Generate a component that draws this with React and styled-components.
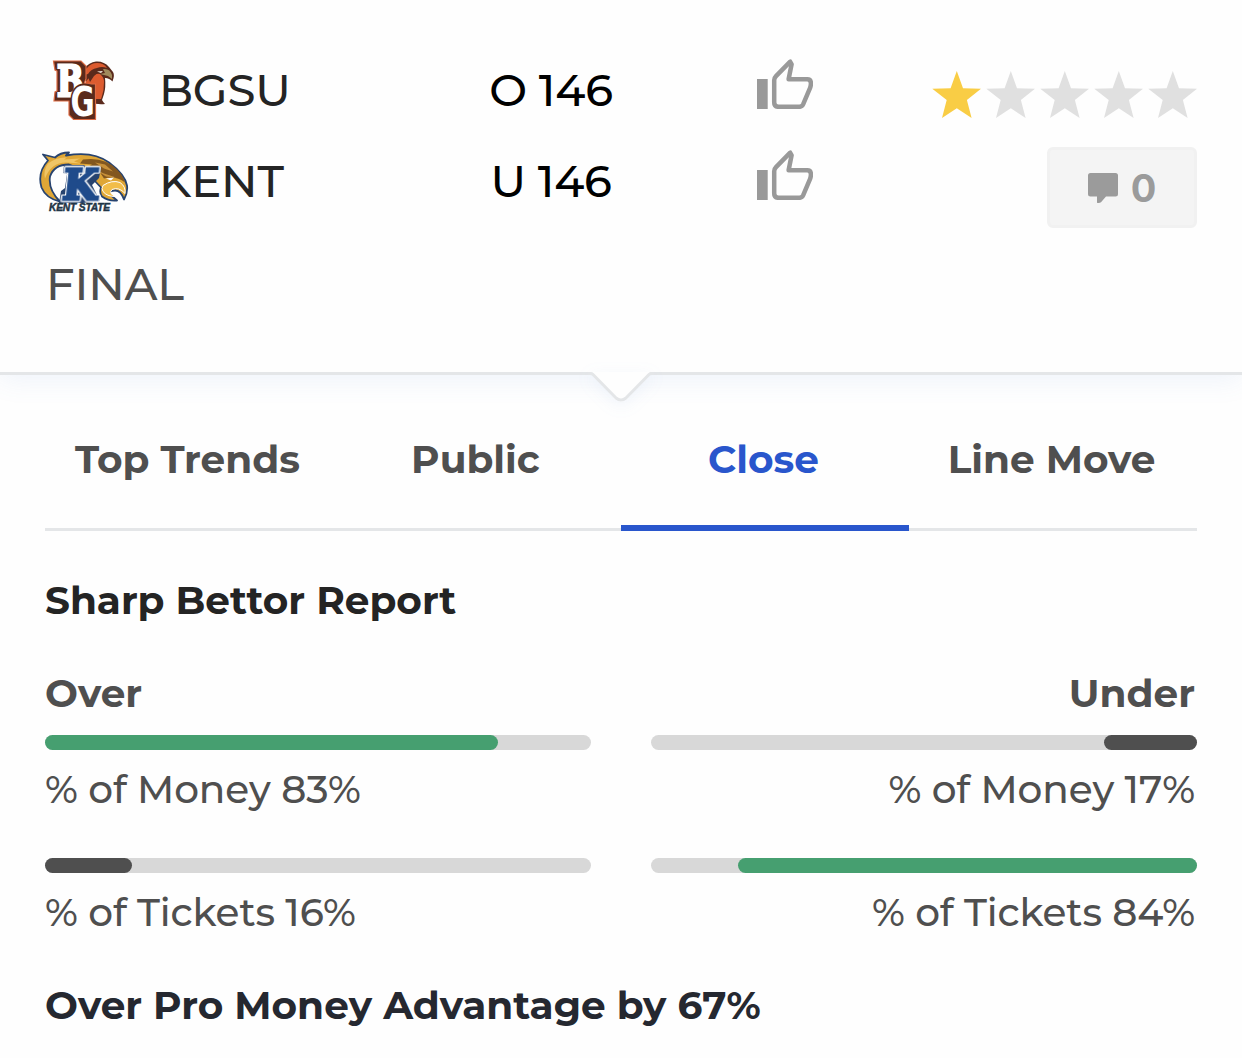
import styled, { createGlobalStyle } from "styled-components";

/* ─── data ────────────────────────────────────────────── */

const RATING = 1;

const TABS = [
  { label: "Top Trends" },
  { label: "Public" },
  { label: "Close", active: true },
  { label: "Line Move" },
];

const SIDES = [
  {
    name: "Over",
    stats: [
      { label: "% of Money", value: 83 },
      { label: "% of Tickets", value: 16 },
    ],
  },
  {
    name: "Under",
    end: true,
    stats: [
      { label: "% of Money", value: 17 },
      { label: "% of Tickets", value: 84 },
    ],
  },
];

/* ─── UI ──────────────────────────────────────────────── */

const GlobalStyle = createGlobalStyle`
  * {
    box-sizing: border-box;
  }
  body {
    margin: 0;
    background: #fefefe;
    font-family: Montserrat, Inter, sans-serif;
    color: #4f4f4f;
  }
`;

const Page = styled.main`
  width: 1242px;
  height: 1058px;
  overflow: hidden;
`;

const Header = styled.header`
  position: relative;
  display: flex;
  justify-content: space-between;
  height: 375px;
  padding: 45px 45px 0 38px;
  background: #fefefe;
  border-bottom: 3px solid #e4e6e8;
  box-shadow: 0 4px 26px rgba(90, 140, 220, 0.1);
`;

const Notch = styled.svg`
  position: absolute;
  left: 585px;
  bottom: -36px;
  filter: drop-shadow(0 4px 8px rgba(90, 140, 220, 0.08));
`;

const Teams = styled.div`
  width: 820px;
`;

const TeamRow = styled.div`
  display: grid;
  grid-template-columns: 122px 327px 128px 1fr;
  align-items: center;
  height: 91px;
  font-size: 45px;
  font-weight: 500;
  letter-spacing: -0.2px;
  white-space: nowrap;

  svg {
    display: block;
  }
`;

const TeamName = styled.span`
  margin: -3px 0 0 -1px;
  color: #242424;
`;

const Line = styled.span`
  margin-top: -3px;
  color: #000;
  justify-self: center;
`;

const ThumbButton = styled.button`
  width: 56px;
  margin: 0 0 13px 142px;
  padding: 0;
  border: 0;
  background: none;
`;

const Status = styled.div`
  margin: 30px 0 0 8px;
  font-size: 45px;
  font-weight: 500;
  line-height: 54px;
  letter-spacing: -0.2px;
`;

const Side = styled.div`
  display: flex;
  flex-direction: column;
  align-items: flex-end;
  padding-top: 26px;
`;

const Stars = styled.div`
  display: flex;
  gap: 5px;

  svg {
    display: block;
  }
`;

const Comments = styled.button`
  display: flex;
  align-items: center;
  justify-content: center;
  gap: 13px;
  width: 150px;
  height: 81px;
  margin-top: 28px;
  border: 3px solid #f1f1f1;
  border-radius: 6px;
  background: #f4f4f4;
  color: #9b9b9b;
  font: 700 38px Inter, sans-serif;
`;

const Body = styled.section`
  padding: 0 45px;
`;

const TabList = styled.nav`
  display: grid;
  grid-template-columns: repeat(4, 1fr);
  height: 156px;
  border-bottom: 3px solid #e4e6e8;
`;

const Tab = styled.button`
  height: 156px;
  padding: 18px 3px 0 0;
  border: 0;
  border-bottom: 6px solid ${(p) => (p.$active ? "#2956cc" : "transparent")};
  background: none;
  color: ${(p) => (p.$active ? "#2956cc" : "#4f4f4f")};
  font: inherit;
  font-size: 39px;
  font-weight: 700;
  white-space: nowrap;
`;

const Title = styled.h2`
  margin: 0;
  padding-top: ${(p) => p.$top || 0}px;
  font-size: 39px;
  line-height: 48px;
  font-weight: 700;
  color: ${(p) => p.$color};
  white-space: nowrap;
`;

const Report = styled.div`
  display: grid;
  grid-template-columns: 1fr 1fr;
  gap: 60px;
  margin-top: 45px;
`;

const SideColumn = styled.div`
  display: flex;
  flex-direction: column;
  align-items: ${(p) => (p.$end ? "flex-end" : "flex-start")};
`;

const SideName = styled.h3`
  margin: 0 0 18px;
  padding-right: 2px;
  font-size: 39px;
  line-height: 48px;
  font-weight: 700;
`;

const Track = styled.div`
  display: flex;
  justify-content: ${(p) => (p.$end ? "flex-end" : "flex-start")};
  width: 100%;
  height: 15px;
  border-radius: 8px;
  background: #d8d8d8;
`;

const Fill = styled.div`
  height: 100%;
  border-radius: 8px;
  background: ${(p) => (p.$lead ? "#469f70" : "#4f4f4f")};
`;

const Stat = styled.p`
  margin: 15px 0 45px;
  padding-right: 2px;
  font-size: 39px;
  font-weight: 500;
  line-height: 48px;
  letter-spacing: -0.08px;
  white-space: nowrap;
`;

/* outlined block letter used by the team logos */
const LogoLetter = styled.text`
  font-family: ${(p) => p.$font || "DejaVu Serif"}, serif;
  font-size: ${(p) => p.$size}px;
  font-weight: 700;
  paint-order: stroke;
  stroke-linejoin: miter;
`;

const HaloLetter = styled(LogoLetter)`
  filter: drop-shadow(1px 0 0 #fff) drop-shadow(-1px 0 0 #fff)
    drop-shadow(0 1px 0 #fff) drop-shadow(0 -1px 0 #fff);
`;

/* ─── icons and logos ─────────────────────────────────── */

function Thumb() {
  return (
    <svg width="56" height="50" viewBox="0 0 56 50" fill="none">
      <path d="M0 20h10.7v30H0z" fill="#999" />
      <path
        d="M33.2 2.700 19 17.100q-1.800 1.800-1.800 4.200v22.200q0 4.300 4.300 4.300h20.800q2.700 0 3.800-2.400l7-16.600q.8-1.900.8-4.600 0-3.900-3.600-3.900H31.600l3-15Z"
        stroke="#999"
        strokeWidth="4.500"
        strokeLinejoin="round"
      />
    </svg>
  );
}

function Star({ on }) {
  return (
    <svg width="49" height="48" viewBox="0 0 49 48">
      <path
        d="m24.800 0 6.200 17.200 18 .5L34.900 29l4.700 18-14.800-9.800L10 47l4.700-18L.3 17.700l18.300-.5Z"
        fill={on ? "#f9cd45" : "#e0e0e0"}
      />
    </svg>
  );
}

function CommentIcon() {
  return (
    <svg width="30" height="30" viewBox="0 0 30 30">
      <path
        d="M2.500 0h25Q30 0 30 2.500v18.500q0 2.500-2.500 2.500H18l-5 5.700q-1.500 1.200-4 .6v-6.300H2.500Q0 23.500 0 21V2.500Q0 0 2.500 0Z"
        fill="#9b9b9b"
      />
    </svg>
  );
}

function FalconsLogo() {
  return (
    <svg width="92" height="64" viewBox="0 0 92 64">
      {/* falcon head */}
      <path
        d="M46 10Q51 3 58 2.500q8-.5 13 5.500l4 5q2 3-.5 9.500-3-3.500-7.500-3.500 1 9-1 16l-2 6q1 2 3 4-8 1-15-2Z"
        fill="#5a2a1c"
      />
      <path
        d="M49 9q4-5 10-5 7 0 10 5-5-2-10 0-6 1-9 6l-4 1q-1-4 3-7Zm2 10q5-5 11-4 4 3 4 8 0 8-2 14l-1 3h-7l-4-9-5-2q-1-6 4-10Z"
        fill="#dc5b2f"
      />
      <path d="m50 18 5-4 6-1-5 4-4 6Z" fill="#5a2a1c" />
      <path d="M65 10q7-1 9 6v4l-4-3-8-2 5-1Z" fill="#a08a5c" />
      <path d="m59 12.500 6-.5-2 2Z" fill="#f4efe6" />
      {/* shield behind the monogram */}
      <path
        d="M15.500 2H43l5 5v13l-2 5h11.500v35.500H35.500L31 56V42H16l1-9 2-1V12l-2-1Z"
        fill="#5a2a1c"
        stroke="#dc6a43"
        strokeWidth="1.200"
      />
      <LogoLetter
        $size={42}
        fill="#fff"
        stroke="#fff"
        strokeWidth="3"
        transform="translate(19 36.500) scale(.74 1)"
      >
        B
      </LogoLetter>
      <LogoLetter
        $font="DejaVu Sans"
        $size={40}
        fill="#fff"
        stroke="#5a2a1c"
        strokeWidth="4"
        transform="translate(32.500 57) scale(.74 1)"
      >
        G
      </LogoLetter>
    </svg>
  );
}

function FlashesLogo() {
  return (
    <svg width="92" height="64" viewBox="-1 -0.500 92 64">
      {/* wing sweeping into the eagle head */}
      <path
        d="M21 51Q7 48 2.500 37-2 22 9 10L4 4l12 3q5-5 14-5l-3 3q27-5 43 7 16 12 18 23 1 7-3 14-3-9-9-9-5 0-6 3l8 7q-8 1-15-4-3-4-1-9L46 20 30 14Q15 14 11 26q-2 13 10 25Z"
        fill="#dfa636"
        stroke="#27436f"
        strokeWidth="1.800"
        strokeLinejoin="round"
      />
      <path
        d="M9 13q9-7 19-6l-3 2 16-1-6 3 7 2-15-1Q12 12 6 28q-2-8 3-15Z"
        fill="#f0c566"
      />
      <path
        d="M44 9q22-3 34 10 6 6 8 13-9-7-21-4l-6-9-11-2 5-3-12-1Z"
        fill="#82571f"
      />
      <path d="m56 12 10 2 8 7-9-3Zm0 7 9 4 12 4-10-1Z" fill="#c8913a" />
      <path d="m67 28 8-1-3 3Z" fill="#fff" />
      <path
        d="M64 35q9-6 17-3 6 4 5 11-6-7-13-4-2 2-1 4l4 3q-8 0-12-5-2-3 0-6Z"
        fill="#f2bd49"
        stroke="#fff"
        strokeWidth="1"
      />
      <path d="M25 14.500h20l3 3h14l-2 10-7 7 8 16-17 2H20l2-12 4-3 2-14-4-1Z" fill="#27436f" />
      <HaloLetter
        $size={42}
        fill="#1f4b8b"
        stroke="#1f4b8b"
        strokeWidth="3"
        transform="translate(22.500 49) skewX(-6) scale(.95 1)"
      >
        K
      </HaloLetter>
      <text
        x="10"
        y="60"
        fontFamily="Liberation Sans, sans-serif"
        fontWeight="700"
        fontStyle="italic"
        fontSize="11"
        textLength="61"
        lengthAdjust="spacingAndGlyphs"
        fill="#1f3546"
        stroke="#1f3546"
        strokeWidth="0.500"
      >
        KENT STATE
      </text>
    </svg>
  );
}

const TEAMS = [
  { name: "BGSU", line: "O 146", Logo: FalconsLogo },
  { name: "KENT", line: "U 146", Logo: FlashesLogo },
];

/* ─── rows ───────────────────────────────────────────── */

function StatBlock({ stat, end }) {
  return (
    <>
      <Track $end={end}>
        <Fill $lead={stat.value > 50} style={{ width: `${stat.value}%` }} />
      </Track>
      <Stat>
        {stat.label} {stat.value}%
      </Stat>
    </>
  );
}

/* ─── main ───────────────────────────────────────────── */

export default function App() {
  return (
    <Page>
      <GlobalStyle />
      <Header>
        <Teams>
          {TEAMS.map(({ name, line, Logo }) => (
            <TeamRow key={name}>
              <Logo />
              <TeamName>{name}</TeamName>
              <Line>{line}</Line>
              <ThumbButton type="button" aria-label={`Like ${line}`}>
                <Thumb />
              </ThumbButton>
            </TeamRow>
          ))}
          <Status>FINAL</Status>
        </Teams>

        <Side>
          <Stars>
            {[0, 1, 2, 3, 4].map((i) => (
              <Star key={i} on={i < RATING} />
            ))}
          </Stars>
          <Comments type="button">
            <CommentIcon /> 0
          </Comments>
        </Side>

        <Notch width="72" height="36" viewBox="0 0 72 36">
          <path d="M6 0h60L42 27q-6 5-12 0Z" fill="#fefefe" />
          <path
            d="M3 1.500h2.500Q7 1.500 8 2.500L31 26q5 4 10 0L64 2.500q1-1 2.500-1H69"
            fill="none"
            stroke="#e4e6e8"
            strokeWidth="3"
          />
        </Notch>
      </Header>

      <Body>
        <TabList>
          {TABS.map((t) => (
            <Tab key={t.label} type="button" $active={t.active}>
              {t.label}
            </Tab>
          ))}
        </TabList>

        <Title $top={45} $color="#242424">
          Sharp Bettor Report
        </Title>

        <Report>
          {SIDES.map((side) => (
            <SideColumn key={side.name} $end={side.end}>
              <SideName>{side.name}</SideName>
              {side.stats.map((s) => (
                <StatBlock key={s.label} stat={s} end={side.end} />
              ))}
            </SideColumn>
          ))}
        </Report>

        <Title $color="#252830">Over Pro Money Advantage by 67%</Title>
      </Body>
    </Page>
  );
}
